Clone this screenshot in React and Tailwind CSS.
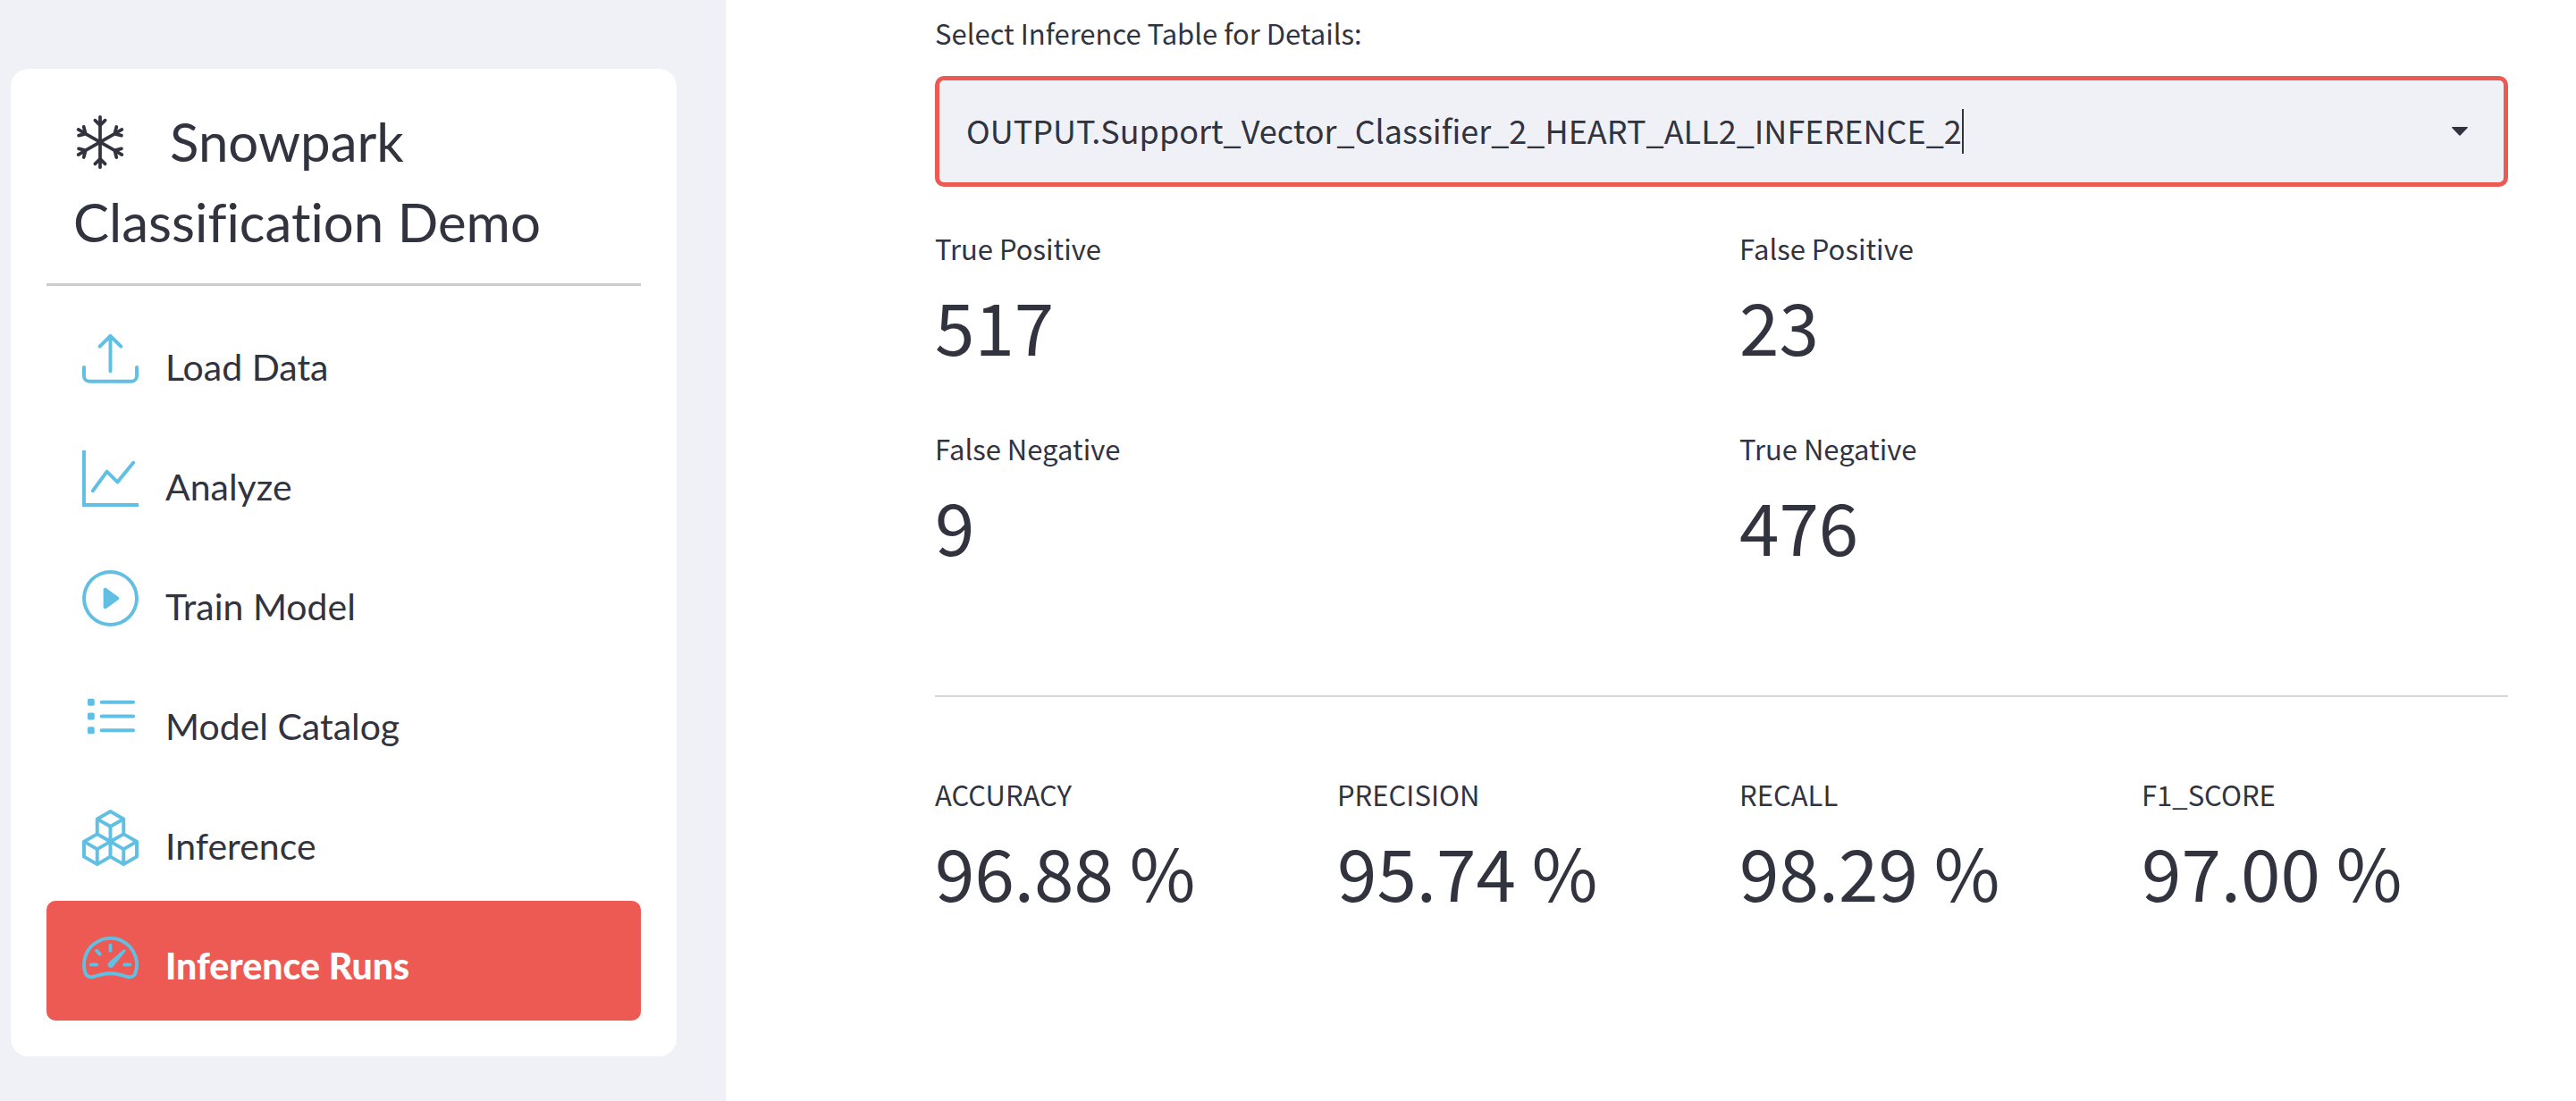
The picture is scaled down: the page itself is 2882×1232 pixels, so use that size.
import { BsSnow, BsUpload, BsGraphUp, BsPlayCircle, BsBoxes, BsSpeedometer2 } from "react-icons/bs";

function ListIcon(props) {
  return (
    <svg viewBox="0 0 16 16" fill="currentColor" {...props}>
      {[3.5, 7.5, 11.5].map((y) => (
        <g key={y}>
          <rect x="1.5" y={y - 1} width="2" height="2" rx="0.5" />
          <rect x="5" y={y - 0.5} width="10" height="1" rx="0.5" />
        </g>
      ))}
    </svg>
  );
}

const navItems = [
  { label: "Load Data", Icon: BsUpload },
  { label: "Analyze", Icon: BsGraphUp },
  { label: "Train Model", Icon: BsPlayCircle },
  { label: "Model Catalog", Icon: ListIcon },
  { label: "Inference", Icon: BsBoxes },
  { label: "Inference Runs", Icon: BsSpeedometer2, active: true },
];

const confusion = [
  { label: "True Positive", value: "517" },
  { label: "False Positive", value: "23" },
  { label: "False Negative", value: "9" },
  { label: "True Negative", value: "476" },
];

const scores = [
  { label: "ACCURACY", value: "96.88 %" },
  { label: "PRECISION", value: "95.74 %" },
  { label: "RECALL", value: "98.29 %" },
  { label: "F1_SCORE", value: "97.00 %" },
];

function NavItem({ label, Icon, active }) {
  return (
    <li>
      <a
        href="#"
        aria-current={active ? "page" : undefined}
        className={
          active
            ? "flex h-[134px] items-center gap-[30px] rounded-[10px] bg-[#ed5a53] px-10 font-black text-white"
            : "flex h-[134px] items-center gap-[30px] rounded-[10px] px-10"
        }
      >
        <Icon className="mb-2 size-[63px] shrink-0 text-[#61bfe4]" aria-hidden="true" />
        <span className="pt-3 text-[41px] leading-[60px]">{label}</span>
      </a>
    </li>
  );
}

function Metric({ label, value }) {
  return (
    <div>
      <dt className="text-[31px] leading-[58px]">{label}</dt>
      <dd className="text-[80px] leading-[112px]">{value}</dd>
    </div>
  );
}

export default function App() {
  return (
    <div className="flex min-h-screen bg-white text-[#31333f]">
      <aside className="w-[812px] shrink-0 bg-[#f0f1f6] pt-[77px] pr-[55px] pb-[50px] pl-3">
        <div className="rounded-[20px] bg-white px-10 pt-9 pb-10 font-[Lato,sans-serif] [font-variant-ligatures:none]">
          <h1 className="border-b-3 border-[#cccccc] px-[30px] pb-6 text-[60px] leading-[90px]">
            <BsSnow className="mr-12 inline-block size-[60px] align-[-8px]" aria-hidden="true" />
            Snowpark Classification Demo
          </h1>
          <nav className="pt-[18px]">
            <ul>
              {navItems.map((item) => (
                <NavItem key={item.label} {...item} />
              ))}
            </ul>
          </nav>
        </div>
      </aside>

      <main className="min-w-0 flex-1 pt-2 pr-[76px] pl-[234px] font-['Noto_Sans_CJK_SC',sans-serif]">
        <label htmlFor="inference-table" className="block text-[31px] leading-[58px]">
          Select Inference Table for Details:
        </label>
        <div className="mt-[19px] flex h-[124px] items-center rounded-[10px] border-5 border-[#ed5a53] bg-[#f0f1f6] pr-10 pl-[30px]">
          <select
            id="inference-table"
            className="appearance-none bg-transparent pb-1 text-[36px] leading-[56px] outline-none [field-sizing:content]"
          >
            <option>OUTPUT.Support_Vector_Classifier_2_HEART_ALL2_INFERENCE_2</option>
          </select>
          <span className="h-[50px] w-[2px] bg-[#31333f]" />
          <svg viewBox="0 0 18 10" className="ml-auto h-[10px] w-[18px]" fill="currentColor" aria-hidden="true">
            <path d="M.6 0h16.800a.6.6 0 0 1 .4 1L9.600 9.600a.9.9 0 0 1-1.200 0L.2 1A.6.6 0 0 1 .6 0z" />
          </svg>
        </div>
        <dl className="mt-10 grid grid-cols-2 gap-x-10 gap-y-[54px]">
          {confusion.map((m) => (
            <Metric key={m.label} {...m} />
          ))}
        </dl>
        <hr className="mt-[135px] border-t-2 border-[#d6d6d9]" />
        <dl className="mt-20 grid grid-cols-4 gap-10">
          {scores.map((m) => (
            <Metric key={m.label} {...m} />
          ))}
        </dl>
      </main>
    </div>
  );
}
